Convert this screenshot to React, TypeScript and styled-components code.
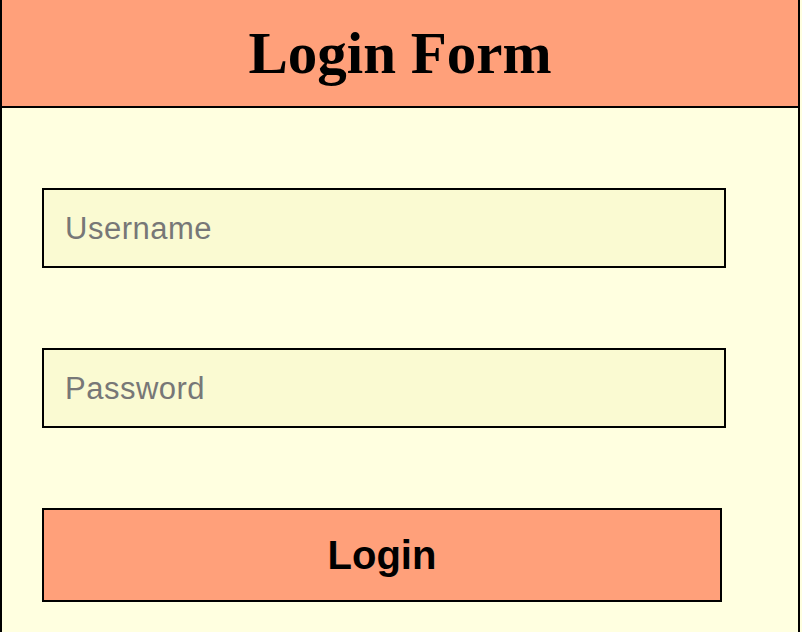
import styled, { createGlobalStyle } from "styled-components";

const GlobalStyle = createGlobalStyle`
  html, body {
    margin: 0;
    padding: 0;
    background: #ffffe0;
  }
  * {
    box-sizing: border-box;
  }
`;

const Page = styled.div`
  width: 800px;
  min-height: 100vh;
  border-left: 2px solid #000;
  border-right: 2px solid #000;
  background: #ffffe0;
`;

const Header = styled.header`
  height: 108px;
  background: #ffa07a;
  border-bottom: 2px solid #000;
  display: flex;
  align-items: center;
  justify-content: center;
`;

const Title = styled.h1`
  margin: 0;
  font-family: "Liberation Serif", "Times New Roman", serif;
  font-size: 59px;
  font-weight: 700;
  color: #000;
`;

const Form = styled.form`
  display: flex;
  flex-direction: column;
  gap: 80px;
  padding: 80px 40px 30px;
`;

const Field = styled.input`
  width: 684px;
  height: 80px;
  padding: 1px 21px 0;
  border: 2px solid #000;
  background: #fafad2;
  font-family: "Liberation Sans", Arial, sans-serif;
  font-size: 31px;
  color: #000;
  outline: none;

  &::placeholder {
    color: #777;
    letter-spacing: 0.5px;
  }
`;

const LoginButton = styled.button`
  width: 680px;
  height: 94px;
  border: 2px solid #000;
  background: #ffa07a;
  font-family: "Liberation Sans", Arial, sans-serif;
  font-size: 40px;
  font-weight: 700;
  color: #000;
  cursor: pointer;
`;

const App = () => {
  return (
    <>
      <GlobalStyle />
      <Page>
        <Header>
          <Title>Login Form</Title>
        </Header>
        <Form onSubmit={(e) => e.preventDefault()}>
          <Field type="text" placeholder="Username" />
          <Field type="password" placeholder="Password" />
          <LoginButton type="submit">Login</LoginButton>
        </Form>
      </Page>
    </>
  );
};

export default App;
